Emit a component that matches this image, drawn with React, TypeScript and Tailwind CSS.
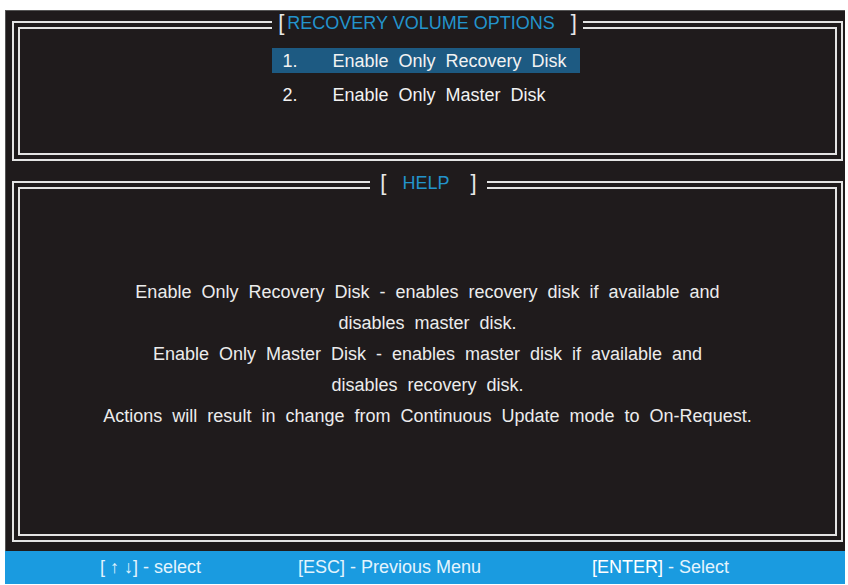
import React from 'react';

/**
 * Recovery volume options screen (BIOS-style)
 */

const helpLines = [
  'Enable Only Recovery Disk - enables recovery disk if available and',
  'disables master disk.',
  'Enable Only Master Disk - enables master disk if available and',
  'disables recovery disk.',
  'Actions will result in change from Continuous Update mode to On-Request.',
];

function Frame({
  title,
  className,
  children,
}: {
  title: React.ReactNode;
  className: string;
  children: React.ReactNode;
}) {
  return (
    <div className={`relative border-2 border-[#e4e4e4] p-[4px] ${className}`}>
      {/* title sits over both lines of the top border */}
      <div className="absolute left-0 right-0 top-[-12px] flex justify-center">{title}</div>
      <div className="h-full border-2 border-[#e4e4e4]">{children}</div>
    </div>
  );
}

export default function App() {
  return (
    <div
      className="w-[848px] h-[585px] bg-white pt-[10px] pl-[5px] pr-[3px] overflow-hidden"
      style={{ fontFamily: '"Liberation Sans", Arial, sans-serif' }}
    >
      <div className="bg-[#1f1b1c] px-[6px] pt-[10px] pb-[9px] pr-[2px] flex flex-col gap-[20px] border-l border-t border-[#555]">
        {/* Options panel */}
        <Frame
          className="h-[140px]"
          title={
            <div className="bg-[#1f1b1c] h-[24px] px-[6px] flex items-center text-[18px] leading-none">
              <span className="text-[#e8e8e8] text-[22px] mr-[3px]">[</span>
              <span className="text-[#2394cc]">RECOVERY VOLUME OPTIONS</span>
              <span className="text-[#e8e8e8] text-[22px] ml-[16px]">]</span>
            </div>
          }
        >
          <div className="flex flex-col items-center pt-[19px] text-[18px] leading-none text-[#f2f2f2] [word-spacing:5px]">
            <div className="w-[308px] h-[25px] bg-[#1d5a82] flex items-center pl-[11px] ml-[-4px]">
              <span className="w-[50px]">1.</span>
              <span>Enable Only Recovery Disk</span>
            </div>
            <div className="w-[308px] h-[25px] flex items-center pl-[11px] ml-[-4px] mt-[9px]">
              <span className="w-[50px]">2.</span>
              <span>Enable Only Master Disk</span>
            </div>
          </div>
        </Frame>

        {/* Help panel */}
        <Frame
          className="h-[361px]"
          title={
            <div className="bg-[#1f1b1c] h-[24px] px-[10px] flex items-center text-[18px] leading-none ml-[2px]">
              <span className="text-[#e8e8e8] text-[22px] mr-[16px]">[</span>
              <span className="text-[#2394cc]">HELP</span>
              <span className="text-[#e8e8e8] text-[22px] ml-[21px]">]</span>
            </div>
          }
        >
          <div className="h-full flex flex-col items-center justify-center pb-[14px] text-[18px] leading-[31px] text-[#ececec] [word-spacing:5px]">
            {helpLines.map((line) => (
              <div key={line}>{line}</div>
            ))}
          </div>
        </Frame>
      </div>

      {/* Key hints */}
      <div className="h-[33px] bg-[#1a9be0] flex items-center text-[18px] text-[#e3f4fd] pl-[95px]">
        <div className="w-[198px]">[ ↑ ↓] - select</div>
        <div className="w-[294px]">[ESC] - Previous Menu</div>
        <div>
          <span className="text-white">[ENTER]</span> - Select
        </div>
      </div>
    </div>
  );
}
